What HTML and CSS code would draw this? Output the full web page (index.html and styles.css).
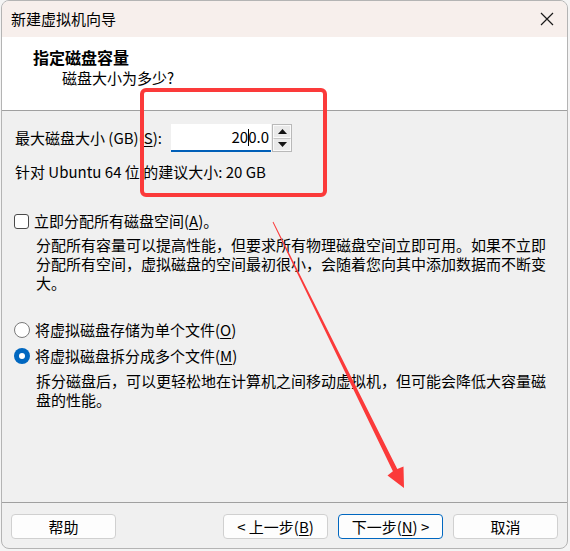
FILE: index.html
```html
<!DOCTYPE html>
<html lang="zh-CN">
<head>
<meta charset="utf-8">
<title>新建虚拟机向导</title>
<link rel="stylesheet" href="styles.css">
</head>
<body>
<div class="window">
  <div class="titlebar">
    <span class="title">新建虚拟机向导</span>
    <span class="close"><svg width="14" height="14" viewBox="0 0 14 14"><path d="M1 1 L13 13 M13 1 L1 13" stroke="#1a1a1a" stroke-width="1.2" fill="none"/></svg></span>
  </div>
  <div class="header">
    <div class="heading">指定磁盘容量</div>
    <div class="subheading">磁盘大小为多少?</div>
  </div>
  <div class="content">
    <div class="size-row">
      <span class="label">最大磁盘大小 (GB)(<u>S</u>):</span>
      <div class="spin">
        <div class="spin-input">20<span class="caret"></span>0.0</div>
        <div class="spin-buttons">
          <div class="spin-btn"><svg width="9" height="5" viewBox="0 0 9 5"><path d="M0 5 L4.5 0 L9 5 Z" fill="#111"/></svg></div>
          <div class="spin-btn"><svg width="9" height="5" viewBox="0 0 9 5"><path d="M0 0 L4.5 5 L9 0 Z" fill="#111"/></svg></div>
        </div>
      </div>
    </div>
    <div class="hint">针对 Ubuntu 64 位 的建议大小: 20 GB</div>

    <div class="option check-option">
      <span class="checkbox"></span>
      <span>立即分配所有磁盘空间(<u>A</u>)。</span>
    </div>
    <div class="desc desc-first">分配所有容量可以提高性能，但要求所有物理磁盘空间立即可用。如果不立即分配所有空间，虚拟磁盘的空间最初很小，会随着您向其中添加数据而不断变大。</div>

    <div class="option radio-first">
      <span class="radio"></span>
      <span>将虚拟磁盘存储为单个文件(<u>O</u>)</span>
    </div>
    <div class="option radio-second">
      <span class="radio checked"></span>
      <span>将虚拟磁盘拆分成多个文件(<u>M</u>)</span>
    </div>
    <div class="desc desc-second">拆分磁盘后，可以更轻松地在计算机之间移动虚拟机，但可能会降低大容量磁盘的性能。</div>
  </div>
  <div class="footer">
    <button class="btn">帮助</button>
    <button class="btn btn-back">&lt; 上一步(<u>B</u>)</button>
    <button class="btn btn-default">下一步(<u>N</u>) &gt;</button>
    <button class="btn">取消</button>
  </div>
</div>

<div class="highlight"></div>
<svg class="arrow" width="570" height="551" viewBox="0 0 570 551">
  <polygon points="272.6,222.2 392.9,471.2 387.5,475.5 404,488 403.5,466.5 397.3,469.0 273.4,221.8" fill="#fb3a3a"/>
</svg>
</body>
</html>
```

FILE: styles.css
```css
html, body {
  margin: 0;
  padding: 0;
  background: #f4f4f4;
}

body {
  font-family: "Noto Sans CJK SC", "Noto Sans", sans-serif;
  font-size: 15px;
  color: #000;
  width: 570px;
  height: 551px;
  overflow: hidden;
  position: relative;
}

u {
  text-decoration: underline;
  text-underline-offset: 2px;
}

.window {
  box-sizing: border-box;
  width: 567px;
  height: 549px;
  margin-left: 1px;
  border: 1px solid #b4b4b4;
  border-radius: 8px;
  overflow: hidden;
  display: flex;
  flex-direction: column;
  background: #f0f0f0;
}

.titlebar {
  height: 36px;
  flex: none;
  background: #f7efec;
  display: flex;
  align-items: center;
  justify-content: space-between;
  padding: 0 13px 0 9px;
  line-height: 20px;
}

.close {
  display: flex;
  align-items: center;
}

.header {
  flex: none;
  height: 74px;
  box-sizing: border-box;
  background: #ffffff;
  border-bottom: 1px solid #a0a0a0;
  padding-top: 10px;
  line-height: 20px;
}

.heading {
  font-weight: bold;
  font-size: 16px;
  padding-left: 31px;
}

.subheading {
  padding-left: 60px;
  margin-top: 1px;
}

.content {
  flex: 1;
  padding: 13px 13px 0 13px;
  line-height: 20px;
}

.size-row {
  display: flex;
  align-items: center;
  height: 28px;
}

.label {
  width: 156px;
}

.spin {
  display: flex;
  height: 28px;
}

.spin-input {
  box-sizing: border-box;
  width: 100px;
  height: 28px;
  background: #fff;
  border-bottom: 2px solid #005fb8;
  text-align: right;
  padding-right: 2px;
  line-height: 26px;
}

.caret {
  display: inline-block;
  width: 1px;
  height: 17px;
  background: #000;
  vertical-align: -3px;
  margin: 0 -0.5px;
}

.spin-buttons {
  margin-left: 1px;
  width: 20px;
  display: flex;
  flex-direction: column;
  border: 1px solid #b9b9b9;
  box-sizing: border-box;
  background: #e9e9e9;
}

.spin-btn {
  flex: 1;
  display: flex;
  align-items: center;
  justify-content: center;
  border: 1px solid #fafafa;
}

.spin-btn + .spin-btn {
  border-top: 1px solid #c4c4c4;
}

.hint {
  margin-top: 10px;
}

.option {
  display: flex;
  align-items: center;
  gap: 5px;
}

.check-option {
  margin-top: 29px;
}

.checkbox {
  box-sizing: border-box;
  width: 15px;
  height: 15px;
  border: 1px solid #4a4a4a;
  border-radius: 3px;
  background: #fff;
  flex: none;
  margin-left: -1px;
}

.desc {
  line-height: 19px;
  padding-left: 21px;
  padding-right: 4px;
}

.desc-first {
  margin-top: 4px;
}

.radio-first {
  margin-top: 28px;
}

.radio-second {
  margin-top: 6px;
}

.desc-second {
  margin-top: 5px;
}

.radio {
  box-sizing: border-box;
  width: 16px;
  height: 16px;
  border: 1px solid #7a7a7a;
  border-radius: 50%;
  background: #fff;
  flex: none;
  margin-left: -1px;
  position: relative;
}

.radio.checked {
  border: none;
  background: #0067c0;
}

.radio.checked::after {
  content: "";
  position: absolute;
  left: 5px;
  top: 5px;
  width: 6px;
  height: 6px;
  border-radius: 50%;
  background: #fff;
}

.footer {
  flex: none;
  height: 46px;
  box-sizing: border-box;
  border-top: 1px solid #a0a0a0;
  display: flex;
  align-items: flex-start;
  gap: 10px;
  padding: 11px 9px 0 9px;
}

.btn {
  width: 105px;
  height: 25px;
  box-sizing: border-box;
  background: #fdfdfd;
  border: 1px solid #d0d0d0;
  border-radius: 4px;
  font-family: inherit;
  font-size: 15px;
  line-height: 20px;
  padding: 0;
  color: #000;
}

.btn-back {
  margin-left: auto;
}

.btn-default {
  border-color: #0067c0;
}

.highlight {
  position: absolute;
  left: 140px;
  top: 88px;
  width: 187px;
  height: 109px;
  box-sizing: border-box;
  border: 4px solid #fb3a3a;
  border-radius: 6px;
}

.arrow {
  position: absolute;
  left: 0;
  top: 0;
  pointer-events: none;
}
```
